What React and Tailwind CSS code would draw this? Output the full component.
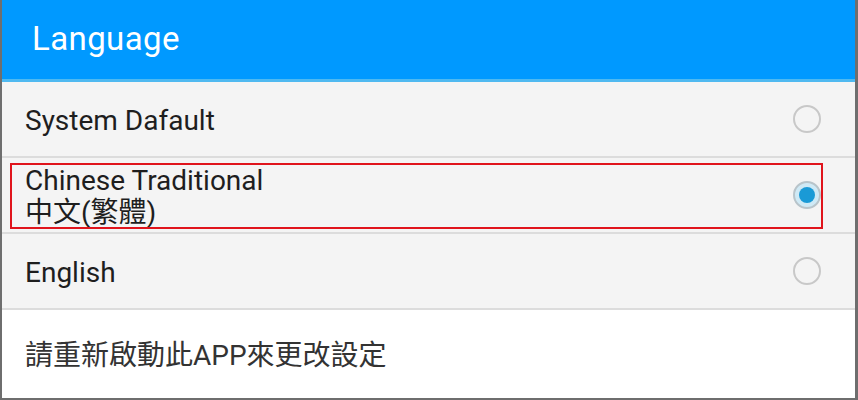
import React, { useState } from 'react';

const font = { fontFamily: 'Roboto, "Noto Sans CJK TC", sans-serif' };

const Radio = ({ checked }) => (
  checked ? (
    <div className="w-[28px] h-[28px] rounded-full bg-[#cfe9f5] border-2 border-[#b8c4ca] flex items-center justify-center">
      <div className="w-[16px] h-[16px] rounded-full bg-[#1a9ad6]" />
    </div>
  ) : (
    <div className="w-[28px] h-[28px] rounded-full border-2 border-[#c8c8c8]" />
  )
);

const options = [
  { id: 'system', lines: ['System Dafault'] },
  { id: 'zh-tw', lines: ['Chinese Traditional', '中文(繁體)'] },
  { id: 'en', lines: ['English'] },
];

export default function App() {
  const [selected, setSelected] = useState('zh-tw');

  return (
    <div className="w-[858px] h-[400px] bg-white border-l-2 border-r-[3px] border-b-2 border-[#6e6e6e] flex flex-col overflow-hidden" style={font}>
      {/* header */}
      <div className="h-[82px] shrink-0 bg-[#0099ff] border-b-[3px] border-[#4fb9f0] flex items-center pl-[30px] pb-[1px]">
        <h1 className="text-white text-[33px] tracking-[0.4px]">Language</h1>
      </div>

      {/* options */}
      {options.map(o => (
        <div
          key={o.id}
          onClick={() => setSelected(o.id)}
          className="relative h-[76px] shrink-0 bg-[#f4f4f4] border-b-2 border-[#dcdcdc] last-of-type:border-b-0 flex items-center justify-between pl-[23px] pr-[34px]"
        >
          <div className="text-[#1e1e1e] text-[28px] leading-[32px] pt-[3px]">
            {o.lines.map(l => <div key={l}>{l}</div>)}
          </div>
          <Radio checked={selected === o.id} />
          {o.id === 'zh-tw' && (
            <div className="absolute left-[8px] top-[5px] w-[813px] h-[66px] border-2 border-[#e0141c] pointer-events-none" />
          )}
        </div>
      ))}

      {/* footer */}
      <div className="flex-1 bg-white flex items-center pl-[23px] pt-[3px]">
        <p className="text-[#333] text-[28px]">請重新啟動此APP來更改設定</p>
      </div>
    </div>
  );
}
